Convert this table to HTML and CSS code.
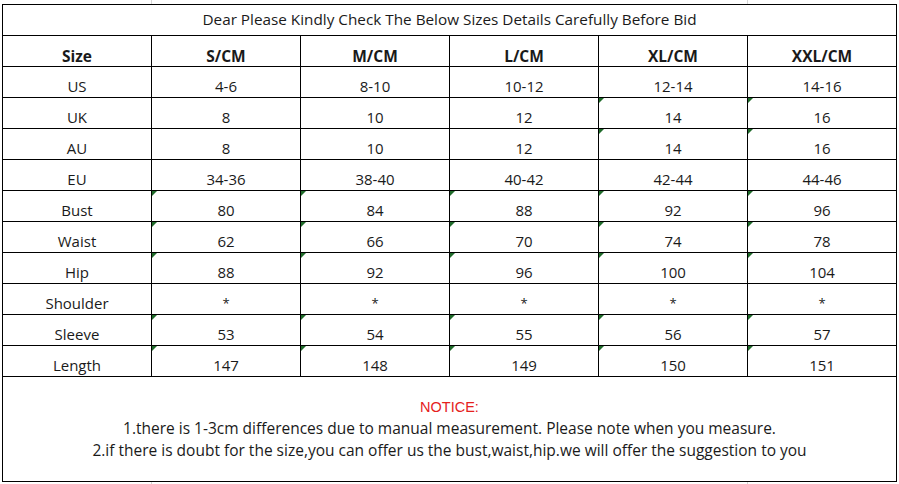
FILE: index.html
```html
<!DOCTYPE html>
<html lang="en">
<head>
<meta charset="utf-8">
<title>Size Chart</title>
<link rel="stylesheet" href="styles.css">
</head>
<body>
<div class="ruler">
  <div class="rc mark first"></div><div class="rc"></div><div class="rc"></div><div class="rc"></div><div class="rc mark"></div><div class="rc"></div>
</div>
<div class="sheet">
  <div class="c title">Dear Please Kindly Check The Below Sizes Details Carefully Before Bid</div>

  <div class="c head">Size</div><div class="c head">S/CM</div><div class="c head">M/CM</div><div class="c head">L/CM</div><div class="c head">XL/CM</div><div class="c head">XXL/CM</div>

  <div class="c">US</div><div class="c">4-6</div><div class="c">8-10</div><div class="c">10-12</div><div class="c">12-14</div><div class="c">14-16</div>

  <div class="c">UK</div><div class="c">8</div><div class="c">10</div><div class="c">12</div><div class="c flag">14</div><div class="c flag">16</div>

  <div class="c">AU</div><div class="c">8</div><div class="c">10</div><div class="c">12</div><div class="c flag">14</div><div class="c flag">16</div>

  <div class="c">EU</div><div class="c">34-36</div><div class="c">38-40</div><div class="c">40-42</div><div class="c">42-44</div><div class="c">44-46</div>

  <div class="c">Bust</div><div class="c flag">80</div><div class="c flag">84</div><div class="c flag">88</div><div class="c flag">92</div><div class="c flag">96</div>

  <div class="c">Waist</div><div class="c flag">62</div><div class="c flag">66</div><div class="c flag">70</div><div class="c flag">74</div><div class="c flag">78</div>

  <div class="c">Hip</div><div class="c flag">88</div><div class="c flag">92</div><div class="c flag">96</div><div class="c flag">100</div><div class="c flag">104</div>

  <div class="c">Shoulder</div><div class="c star">*</div><div class="c star">*</div><div class="c star">*</div><div class="c star">*</div><div class="c star">*</div>

  <div class="c">Sleeve</div><div class="c flag">53</div><div class="c flag">54</div><div class="c flag">55</div><div class="c flag">56</div><div class="c flag">57</div>

  <div class="c">Length</div><div class="c flag">147</div><div class="c flag">148</div><div class="c flag">149</div><div class="c flag">150</div><div class="c flag">151</div>

  <div class="notice">
    <p class="notice-title">NOTICE:</p>
    <p class="notice-line">1.there is 1-3cm differences due to manual measurement. Please note when you measure.</p>
    <p class="notice-line">2.if there is doubt for the size,you can offer us the bust,waist,hip.we will offer the suggestion to you</p>
  </div>
</div>
<div class="ruler bottom">
  <div class="rc mark first"></div><div class="rc"></div><div class="rc"></div><div class="rc"></div><div class="rc mark"></div><div class="rc"></div>
</div>
</body>
</html>
```

FILE: styles.css
```css
html, body {
  margin: 0;
  padding: 0;
  background: #ffffff;
}

body {
  font-family: "Open Sans", "Noto Sans", "DejaVu Sans", sans-serif;
  color: #1a1a1a;
  width: 899px;
  height: 484px;
  overflow: hidden;
}

.ruler {
  display: flex;
  height: 4px;
  margin-left: 2px;
}

.ruler.bottom {
  height: 3px;
}

.rc {
  width: 149px;
  height: 100%;
  box-sizing: border-box;
}

.rc.first {
  width: 150px;
}

.rc.mark {
  border-right: 1px solid #d6d6d6;
}

.sheet {
  display: grid;
  grid-template-columns: repeat(6, 148px);
  grid-template-rows: repeat(12, 30px) 104px;
  gap: 1px;
  padding: 1px;
  background: #000000;
  width: max-content;
  margin-left: 2px;
}

.c {
  position: relative;
  background: #ffffff;
  display: flex;
  align-items: flex-end;
  justify-content: center;
  font-size: 15px;
  line-height: 20px;
  padding-bottom: 1px;
  box-sizing: border-box;
}

.title {
  grid-column: 1 / -1;
  align-items: center;
  font-size: 15.3px;
  padding-bottom: 2px;
  padding-top: 0;
}

.head {
  font-weight: 700;
  font-size: 15.5px;
  padding-bottom: 0;
}

.star {
  font-size: 13px;
}

.flag::before {
  content: "";
  position: absolute;
  left: 0;
  top: 0;
  width: 0;
  height: 0;
  border-top: 5px solid #1f6b2a;
  border-right: 5px solid transparent;
}

.notice {
  grid-column: 1 / -1;
  background: #ffffff;
  box-sizing: border-box;
  padding-top: 19px;
  text-align: center;
}

.notice p {
  margin: 0;
}

.notice-title {
  font-family: "Liberation Sans", Arial, sans-serif;
  font-size: 14.5px;
  line-height: 22px;
  color: #e5211d;
}

.notice-line {
  font-size: 15.5px;
  line-height: 21.5px;
  color: #1a1a1a;
}
```
